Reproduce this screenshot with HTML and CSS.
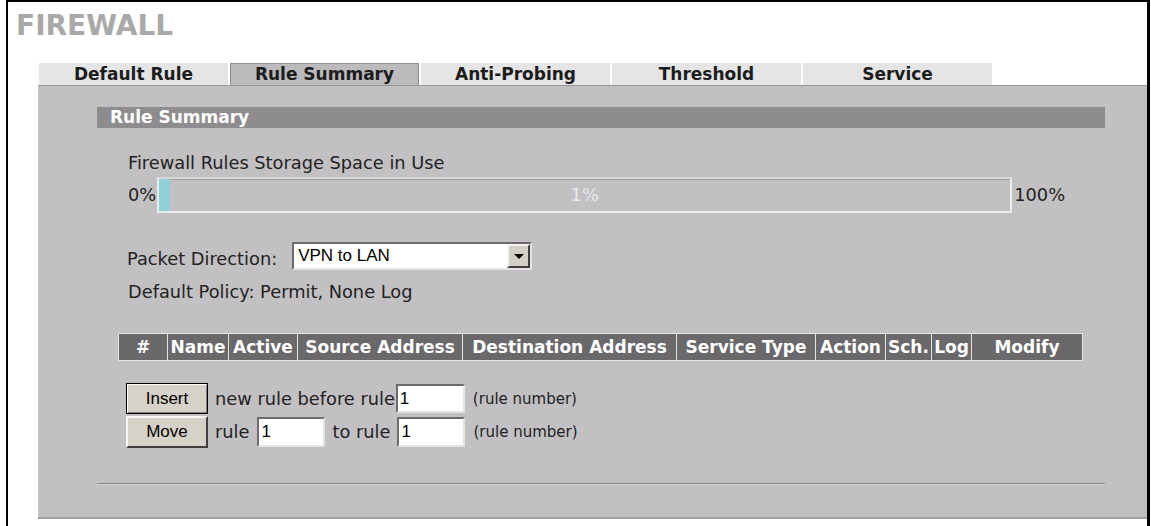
FILE: index.html
```html
<!DOCTYPE html>
<html lang="en">
<head>
    <meta charset="UTF-8">
    <title>Firewall - Rule Summary</title>
    <link rel="stylesheet" href="styles.css">
</head>
<body>
    <div class="frame">
        <h1 class="title">FIREWALL</h1>
        <ul class="tabs">
            <li>Default Rule</li>
            <li class="active">Rule Summary</li>
            <li>Anti-Probing</li>
            <li>Threshold</li>
            <li>Service</li>
        </ul>
        <div class="panel">
            <div class="section-bar">Rule Summary</div>
            <div class="content">
                <div class="line storage-label">Firewall Rules Storage Space in Use</div>
                <div class="usage">
                    <span class="pct">0%</span>
                    <div class="usage-bar">
                        <div class="usage-fill" style="width: 1.3%"></div>
                        <span class="usage-text">1%</span>
                    </div>
                    <span class="pct">100%</span>
                </div>
                <div class="direction">
                    <span class="direction-label">Packet Direction:</span>
                    <div class="select">
                        <span class="select-value">VPN to LAN</span>
                        <span class="select-btn"><span class="arrow"></span></span>
                    </div>
                </div>
                <div class="line policy">Default Policy: Permit, None Log</div>
                <table class="rules">
                    <thead>
                        <tr>
                            <th class="c-num">#</th>
                            <th class="c-name">Name</th>
                            <th class="c-active">Active</th>
                            <th class="c-src">Source Address</th>
                            <th class="c-dst">Destination Address</th>
                            <th class="c-svc">Service Type</th>
                            <th class="c-action">Action</th>
                            <th class="c-sch">Sch.</th>
                            <th class="c-log">Log</th>
                            <th class="c-modify">Modify</th>
                        </tr>
                    </thead>
                </table>
                <div class="actions">
                    <div class="action-row">
                        <button class="btn btn-default">Insert</button>
                        <span class="txt t-before">new rule before rule</span>
                        <input class="num" type="text" value="1">
                        <span class="note">(rule number)</span>
                    </div>
                    <div class="action-row row-move">
                        <button class="btn">Move</button>
                        <span class="txt t-rule">rule</span>
                        <input class="num" type="text" value="1">
                        <span class="txt t-to">to rule</span>
                        <input class="num" type="text" value="1">
                        <span class="note">(rule number)</span>
                    </div>
                </div>
            </div>
            <div class="divider"></div>
        </div>
    </div>
</body>
</html>
```

FILE: styles.css
```css
* {
    box-sizing: border-box;
}
body {
    margin: 0;
    background: #fff;
    font-family: "DejaVu Sans", Verdana, sans-serif;
    color: #222;
}
.frame {
    margin-left: 6px;
    margin-right: 1px;
    height: 526px;
    border-left: 2px solid #000;
    border-top: 2px solid #000;
    border-right: 3px solid #000;
}
.title {
    margin: 8px 0 0 8px;
    font-size: 28px;
    line-height: 32px;
    font-weight: bold;
    color: #a9a9a9;
}

/* tabs */
.tabs {
    display: flex;
    list-style: none;
    margin: 21px 0 0 31px;
    padding: 0;
}
.tabs li {
    width: 189px;
    height: 22px;
    margin-right: 2px;
    line-height: 22px;
    text-align: center;
    background: #e6e5e6;
    font-size: 17px;
    font-weight: bold;
    color: #1c1c1c;
}
.tabs li.active {
    background: #bdbabe;
    border: 1px solid #8f8c90;
    border-bottom: none;
    line-height: 21px;
}

/* grey panel */
.panel {
    margin-left: 30px;
    background: #c3c0c4;
    border-top: 1px solid #99969a;
    border-bottom: 2px solid #a29fa3;
    padding: 21px 42px 32px 59px;
}
.section-bar {
    height: 21px;
    line-height: 21px;
    padding-left: 13px;
    background: #8f8c90;
    color: #fff;
    font-size: 17px;
    font-weight: bold;
}
.content {
    padding-left: 21px;
    font-size: 17.8px;
}
.line {
    line-height: 22px;
    padding-left: 10px;
}
.storage-label {
    margin-top: 24px;
}

/* storage usage bar */
.usage {
    display: flex;
    align-items: center;
    height: 36px;
    margin-top: 3px;
    padding-left: 10px;
}
.pct {
    line-height: 22px;
}
.usage-bar {
    display: grid;
    width: 855px;
    height: 36px;
    margin: 0 2px 0 1px;
    border: 2px solid #ececec;
    border-top-color: #d8d6d8;
    box-shadow: inset 1px 1px #a19ea2;
}
.usage-fill {
    grid-area: 1 / 1;
    justify-self: start;
    height: 100%;
    background: #8fcfd6;
}
.usage-text {
    grid-area: 1 / 1;
    justify-self: center;
    align-self: center;
    color: #e9e8ea;
    line-height: 22px;
}

/* packet direction */
.direction {
    display: flex;
    align-items: center;
    margin-top: 29px;
    padding-left: 9px;
}
.direction-label {
    line-height: 22px;
    padding-top: 6px;
    margin-right: 15px;
}
.select {
    display: flex;
    align-items: center;
    width: 240px;
    height: 28px;
    background: #fff;
    border: 2px solid;
    border-color: #6e6b6f #e4e2e4 #e4e2e4 #6e6b6f;
}
.select-value {
    flex: 1;
    padding-left: 4px;
    font-family: "Liberation Sans", Arial, sans-serif;
    font-size: 17px;
    color: #000;
}
.select-btn {
    display: flex;
    align-items: center;
    justify-content: center;
    width: 23px;
    align-self: stretch;
    background: #d4d0c8;
    border: 2px solid;
    border-color: #f4f4f4 #404040 #404040 #f4f4f4;
}
.arrow {
    width: 0;
    height: 0;
    border-left: 5px solid transparent;
    border-right: 5px solid transparent;
    border-top: 5px solid #000;
}
.policy {
    margin-top: 11px;
}

/* rules table header */
.rules {
    margin-top: 30px;
    width: 964px;
    table-layout: fixed;
    border-collapse: collapse;
}
.rules th {
    height: 27px;
    padding: 0;
    background: #6b686c;
    border: 1px solid #e6e4e6;
    color: #fff;
    font-size: 17px;
    font-weight: bold;
    text-align: center;
    white-space: nowrap;
    overflow: hidden;
}
.c-num { width: 49px; }
.c-name { width: 61px; }
.c-active { width: 69px; }
.c-src { width: 165px; }
.c-dst { width: 214px; }
.c-svc { width: 139px; }
.c-action { width: 70px; }
.c-sch { width: 46px; }
.c-log { width: 40px; }
.c-modify { width: 111px; }

/* insert / move */
.actions {
    margin-top: 22px;
    padding-left: 8px;
}
.action-row {
    display: flex;
    align-items: center;
    height: 31px;
}
.row-move {
    margin-top: 2px;
    height: 32px;
}
.btn {
    width: 82px;
    height: 100%;
    padding: 0;
    background: #d6d2ca;
    border: 2px solid;
    border-color: #f6f6f6 #404040 #404040 #f6f6f6;
    font-family: "Liberation Sans", Arial, sans-serif;
    font-size: 17px;
    color: #000;
}
.btn-default {
    border: 1px solid #000;
    box-shadow: inset 1px 1px #fff, inset -1px -1px #808080;
}
.txt {
    line-height: 22px;
}
.t-before {
    margin: 0 1px 0 7px;
}
.t-rule {
    margin: 0 8px 0 7px;
}
.t-to {
    margin: 0 7px;
}
.num {
    width: 69px;
    height: 29px;
    padding: 0 2px;
    background: #fff;
    border: 2px solid;
    border-color: #6e6b6f #e4e2e4 #e4e2e4 #6e6b6f;
    font-family: "Liberation Sans", Arial, sans-serif;
    font-size: 17px;
    color: #000;
}
.row-move .num {
    width: 68px;
    height: 30px;
}
.note {
    margin-left: 8px;
    font-size: 15px;
}
.divider {
    margin-top: 35px;
    border-top: 1px solid #88858a;
    border-bottom: 1px solid #d6d4d7;
}
```
